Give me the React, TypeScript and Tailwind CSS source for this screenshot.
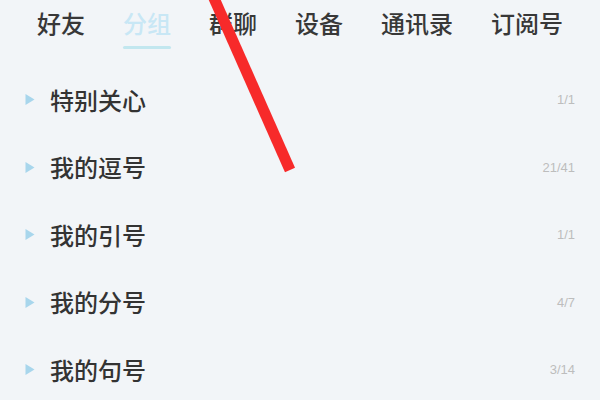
import React from 'react';

const tabs = ['好友', '分组', '群聊', '设备', '通讯录', '订阅号'];

const groups = [
  { name: '特别关心', count: '1/1' },
  { name: '我的逗号', count: '21/41' },
  { name: '我的引号', count: '1/1' },
  { name: '我的分号', count: '4/7' },
  { name: '我的句号', count: '3/14' },
];

const App: React.FC = () => {
  return (
    <div
      className="relative w-[600px] h-[400px] overflow-hidden bg-[#f2f5f8]"
      style={{ fontFamily: '"Noto Sans CJK SC", "Noto Sans", sans-serif' }}
    >
      {/* Tab bar */}
      <div className="flex items-start gap-[38px] pl-[37px] pt-[5px] h-[66px]">
        {tabs.map((t, i) => (
          <div key={t} className="flex flex-col items-center">
            <span
              className={
                i === 1
                  ? 'text-[24px] leading-[35px] font-medium text-[#c8e7f5]'
                  : 'text-[24px] leading-[35px] font-medium text-[#383838]'
              }
            >
              {t}
            </span>
            {i === 1 && <div className="mt-[6px] h-[3px] w-full rounded-full bg-[#c2e7ef]" />}
          </div>
        ))}
      </div>

      {/* Group list */}
      <div className="flex flex-col">
        {groups.map((g) => (
          <div key={g.name} className="flex items-center h-[67.5px] pl-[25px] pr-[25px]">
            <svg width="10" height="13" viewBox="0 0 10 13" className="mr-[15px]">
              <path d="M0.5 1 L9.5 6.5 L0.5 12 Z" fill="#a8d6ec" />
            </svg>
            <span className="text-[24px] font-medium text-[#333333] flex-1">{g.name}</span>
            <span className="text-[13px] text-[#bdbdbd]" style={{ fontFamily: '"Liberation Sans", sans-serif' }}>
              {g.count}
            </span>
          </div>
        ))}
      </div>

      {/* Red annotation stroke */}
      <svg className="absolute left-0 top-0 pointer-events-none" width="600" height="400">
        <line x1="213" y1="-4" x2="290" y2="170" stroke="#f72a2a" strokeWidth="11" strokeLinecap="butt" />
      </svg>
    </div>
  );
};

export default App;
